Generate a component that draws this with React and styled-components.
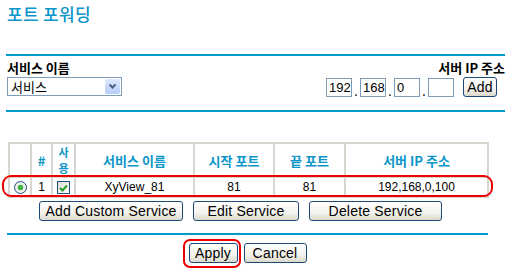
import React from "react";
import styled, { createGlobalStyle } from "styled-components";

const GlobalStyle = createGlobalStyle`
  body {
    margin: 0;
    background: #ffffff;
    font-family: "Noto Sans CJK KR", "Liberation Sans", sans-serif;
    color: #000000;
  }
`;

const Page = styled.div`
  position: relative;
  width: 512px;
  height: 279px;
  overflow: hidden;
`;

const Title = styled.div`
  padding: 4px 0 0 7px;
  height: 23px;
  font-size: 17px;
  font-weight: 500;
  line-height: 20px;
  color: #0a96c8;
  letter-spacing: 0.3px;
`;

const Rule = styled.div`
  height: 2px;
  background: #0099cc;
  margin-left: ${(p) => p.left || 6}px;
  width: ${(p) => p.width || 499}px;
  margin-top: ${(p) => p.top || 0}px;
`;

const FormRow = styled.div`
  display: flex;
  justify-content: space-between;
  padding: 4px 7px 0 7px;
  height: 50px;
  box-sizing: border-box;
`;

const Field = styled.div`
  display: flex;
  flex-direction: column;
  align-items: ${(p) => (p.right ? "flex-end" : "flex-start")};
`;

const Label = styled.div`
  font-size: 13px;
  font-weight: 700;
  line-height: 16px;
  height: 17px;
`;

const Select = styled.div`
  display: flex;
  align-items: center;
  justify-content: space-between;
  width: 115px;
  height: 19px;
  box-sizing: border-box;
  border: 1px solid #7f9db9;
  padding-left: 3px;
  font-size: 13px;
  line-height: 17px;
`;

const DropButton = styled.div`
  width: 15px;
  height: 15px;
  margin-right: 1px;
  border-radius: 2px;
  background: linear-gradient(#dde8fe, #b6ccf7);
  display: flex;
  align-items: center;
  justify-content: center;
`;

const IpRow = styled.div`
  display: flex;
  align-items: flex-end;
  padding-right: 8px;
`;

const IpBox = styled.div`
  width: 26px;
  height: 19px;
  box-sizing: border-box;
  border: 1px solid #7f9db9;
  font-family: "Liberation Sans", sans-serif;
  font-size: 13px;
  line-height: 17px;
  padding-left: 2px;
`;

const Dot = styled.span`
  width: 8px;
  font-size: 12px;
  line-height: 12px;
  text-align: center;
`;

const Button = styled.div`
  display: flex;
  align-items: center;
  justify-content: center;
  width: ${(p) => p.w}px;
  height: 20px;
  box-sizing: border-box;
  border: 1px solid #1c4a7a;
  border-radius: 3px;
  background: linear-gradient(#ffffff, #f3f2ec 60%, #dcd9cc);
  font-family: "Liberation Sans", sans-serif;
  font-size: 14px;
  letter-spacing: 0.2px;
  color: #000;
`;

const AddButton = styled(Button)`
  margin-left: 9px;
`;

const TableWrap = styled.div`
  margin: 30px 0 0 8px;
`;

const Grid = styled.table`
  border-collapse: collapse;
  table-layout: fixed;
  width: 479px;
`;

const Th = styled.th`
  height: 32px;
  padding: 0;
  border: 2px solid #d8d6ce;
  color: #0a96c8;
  font-size: 13px;
  font-weight: 700;
  line-height: 15px;
  text-align: center;
`;

const StackedHead = styled.div`
  display: flex;
  flex-direction: column;
  align-items: center;
  font-size: 11px;
  line-height: 16px;
`;

const Td = styled.td`
  height: 18px;
  padding: 0;
  border: 2px solid #d8d6ce;
  font-family: "Liberation Sans", sans-serif;
  font-size: 12px;
  text-align: center;
  line-height: 14px;
`;

const Radio = styled.span`
  display: inline-block;
  width: 11px;
  height: 11px;
  border-radius: 50%;
  border: 1px solid #1c5180;
  background: radial-gradient(circle, #3bb83b 0 2.5px, #e6e6e0 3px, #ffffff 100%);
  vertical-align: middle;
`;

const Check = styled.span`
  display: inline-flex;
  align-items: center;
  justify-content: center;
  width: 11px;
  height: 11px;
  border: 1px solid #1c5180;
  background: linear-gradient(135deg, #dcdcd6, #ffffff);
  vertical-align: middle;
`;

const ButtonRow = styled.div`
  display: flex;
  gap: 10px;
  padding: 3px 0 0 39px;
`;

const FooterRow = styled.div`
  display: flex;
  justify-content: center;
  gap: 6px;
  width: 479px;
  margin: 8px 0 0 8px;
`;

const Highlight = styled.div`
  position: absolute;
  left: ${(p) => p.x}px;
  top: ${(p) => p.y}px;
  width: ${(p) => p.w}px;
  height: ${(p) => p.h}px;
  border: 2px solid #ee0000;
  border-radius: ${(p) => p.r}px;
  box-sizing: border-box;
  pointer-events: none;
`;

const columns = [22, 21, 23, 119, 80, 71, 143];

export default function App() {
  return (
    <Page>
      <GlobalStyle />
      <Title>포트 포워딩</Title>
      <Rule top={27} />
      <FormRow>
        <Field>
          <Label>서비스 이름</Label>
          <Select>
            서비스
            <DropButton>
              <svg width="9" height="7" viewBox="0 0 9 7">
                <path d="M1.5 1.5 L4.5 4.5 L7.5 1.5" fill="none" stroke="#4d6185" strokeWidth="2" />
              </svg>
            </DropButton>
          </Select>
        </Field>
        <Field right>
          <Label>서버 IP 주소</Label>
          <IpRow>
            <IpBox>192</IpBox>
            <Dot>.</Dot>
            <IpBox>168</IpBox>
            <Dot>.</Dot>
            <IpBox>0</IpBox>
            <Dot>.</Dot>
            <IpBox />
            <AddButton w={34}>Add</AddButton>
          </IpRow>
        </Field>
      </FormRow>
      <Rule top={4} />
      <TableWrap>
        <Grid>
          <colgroup>
            {columns.map((w, i) => (
              <col key={i} style={{ width: w }} />
            ))}
          </colgroup>
          <thead>
            <tr>
              <Th />
              <Th>#</Th>
              <Th>
                <StackedHead>
                  <span>사</span>
                  <span>용</span>
                </StackedHead>
              </Th>
              <Th>서비스 이름</Th>
              <Th>시작 포트</Th>
              <Th>끝 포트</Th>
              <Th>서버 IP 주소</Th>
            </tr>
          </thead>
          <tbody>
            <tr>
              <Td><Radio /></Td>
              <Td>1</Td>
              <Td>
                <Check>
                  <svg width="9" height="8" viewBox="0 0 9 8">
                    <path d="M1 4 L3.5 6.5 L8 1.5" fill="none" stroke="#21a121" strokeWidth="2" />
                  </svg>
                </Check>
              </Td>
              <Td>XyView_81</Td>
              <Td>81</Td>
              <Td>81</Td>
              <Td>192,168,0,100</Td>
            </tr>
          </tbody>
        </Grid>
      </TableWrap>
      <ButtonRow>
        <Button w={144}>Add Custom Service</Button>
        <Button w={106}>Edit Service</Button>
        <Button w={133}>Delete Service</Button>
      </ButtonRow>
      <Rule left={7} width={481} top={12} />
      <FooterRow>
        <Button w={49}>Apply</Button>
        <Button w={63}>Cancel</Button>
      </FooterRow>
      <Highlight x={2} y={175} w={491} h={22} r={9} />
      <Highlight x={183} y={239} w={58} h={29} r={7} />
    </Page>
  );
}
